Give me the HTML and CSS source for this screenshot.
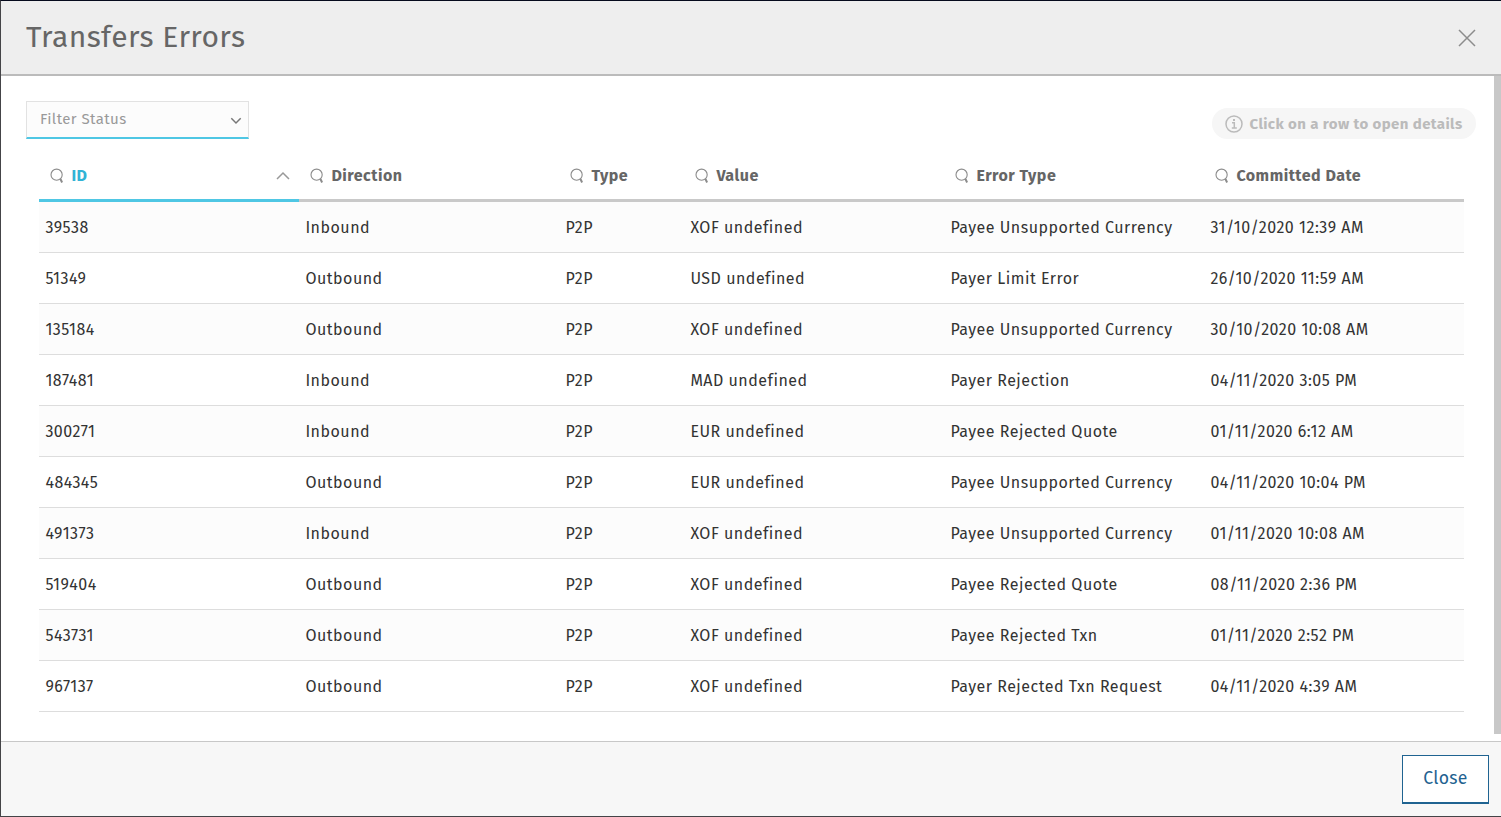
FILE: index.html
```html
<!DOCTYPE html>
<html lang="en">
<head>
<meta charset="utf-8">
<title>Transfers Errors</title>
<link rel="stylesheet" href="styles.css">
</head>
<body>
<svg class="sprite" aria-hidden="true">
  <symbol id="search" viewBox="0 0 14 16"><circle cx="6.6" cy="6.7" r="5.6"/><path d="M10.4 10.8l1.7 3.7" class="handle"/></symbol>
</svg>
<section class="modal">
  <header class="modal-header">
    <h1 class="title">Transfers Errors</h1>
    <svg class="dismiss" viewBox="0 0 18 18"><path d="M1 1l16 16M17 1L1 17"/></svg>
  </header>
  <main class="modal-body">
    <div class="toolbar">
      <div class="select"><span class="placeholder">Filter Status</span>
        <svg class="chevron" viewBox="0 0 12 8"><path d="M1.3 1.3L6 6l4.7-4.7"/></svg></div>
      <div class="hint">
        <svg class="info" viewBox="0 0 18 18"><circle cx="9" cy="9" r="8"/><path d="M7 7.7h2.3v5M6.8 13h5" /><path class="dot" d="M8 4h2v2H8z"/></svg>
        <span class="hint-text">Click on a row to open details</span></div>
    </div>
    <div class="table">
      <div class="row head">
        <div class="th active"><svg class="search"><use href="#search"/></svg><span>ID</span><svg class="sort" viewBox="0 0 14 9"><path d="M1 8l6-6 6 6"/></svg></div>
        <div class="th"><svg class="search"><use href="#search"/></svg><span>Direction</span></div>
        <div class="th"><svg class="search"><use href="#search"/></svg><span>Type</span></div>
        <div class="th"><svg class="search"><use href="#search"/></svg><span>Value</span></div>
        <div class="th"><svg class="search"><use href="#search"/></svg><span>Error Type</span></div>
        <div class="th"><svg class="search"><use href="#search"/></svg><span>Committed Date</span></div>
      </div>
      <div class="row"><div>39538</div><div>Inbound</div><div>P2P</div><div>XOF undefined</div><div>Payee Unsupported Currency</div><div>31/10/2020 12:39 AM</div></div>
      <div class="row"><div>51349</div><div>Outbound</div><div>P2P</div><div>USD undefined</div><div>Payer Limit Error</div><div>26/10/2020 11:59 AM</div></div>
      <div class="row"><div>135184</div><div>Outbound</div><div>P2P</div><div>XOF undefined</div><div>Payee Unsupported Currency</div><div>30/10/2020 10:08 AM</div></div>
      <div class="row"><div>187481</div><div>Inbound</div><div>P2P</div><div>MAD undefined</div><div>Payer Rejection</div><div>04/11/2020 3:05 PM</div></div>
      <div class="row"><div>300271</div><div>Inbound</div><div>P2P</div><div>EUR undefined</div><div>Payee Rejected Quote</div><div>01/11/2020 6:12 AM</div></div>
      <div class="row"><div>484345</div><div>Outbound</div><div>P2P</div><div>EUR undefined</div><div>Payee Unsupported Currency</div><div>04/11/2020 10:04 PM</div></div>
      <div class="row"><div>491373</div><div>Inbound</div><div>P2P</div><div>XOF undefined</div><div>Payee Unsupported Currency</div><div>01/11/2020 10:08 AM</div></div>
      <div class="row"><div>519404</div><div>Outbound</div><div>P2P</div><div>XOF undefined</div><div>Payee Rejected Quote</div><div>08/11/2020 2:36 PM</div></div>
      <div class="row"><div>543731</div><div>Outbound</div><div>P2P</div><div>XOF undefined</div><div>Payee Rejected Txn</div><div>01/11/2020 2:52 PM</div></div>
      <div class="row"><div>967137</div><div>Outbound</div><div>P2P</div><div>XOF undefined</div><div>Payer Rejected Txn Request</div><div>04/11/2020 4:39 AM</div></div>
    </div>
    <div class="scrollbar"></div>
  </main>
  <footer class="modal-footer"><button class="close">Close</button></footer>
</section>
</body>
</html>
```
FILE: styles.css
```css
* { box-sizing: border-box; }
body { margin: 0; font-family: "Fira Sans", "Noto Sans", sans-serif; font-size: 16px; letter-spacing: 0.5px; color: #333; background: #fff; }
svg { fill: none; flex: none; display: block; }
.sprite { position: absolute; width: 0; height: 0; }
.modal { width: 1501px; height: 817px; display: flex; flex-direction: column; border: solid #444447; border-width: 1px 0 1px 1px; border-top-color: #050a1c; overflow: hidden; }
.modal-header { height: 75px; flex: none; display: flex; justify-content: space-between; align-items: center; padding: 0 26px 0 25px; background: #eee; border-bottom: 2px solid #bbb; }
.title { margin: 0 0 2px; font-size: 30px; line-height: 40px; font-weight: 400; color: #666; letter-spacing: 0.4px; }
.dismiss { width: 18px; height: 18px; margin-right: -0.5px; stroke: #8c8c8c; stroke-width: 1.5; }
.modal-body { flex: 1; position: relative; padding: 25px 37px 0 25px; }
.toolbar { display: flex; justify-content: space-between; align-items: flex-start; height: 50px; margin-right: -12px; }
.select { width: 223px; height: 38px; display: flex; align-items: center; justify-content: space-between; padding: 0 6px 0 13px; background: #fcfcfc; border: 1px solid #e2e2e2; border-bottom: 2px solid #4fc7e4; color: #999; font-size: 15px; }
.placeholder { letter-spacing: 0.4px; line-height: 18px; margin-bottom: 1px; }
.chevron { width: 12px; height: 8px; margin-top: 3px; stroke: #777; stroke-width: 1.5; }
.hint { display: flex; align-items: center; gap: 7px; width: 264px; height: 31px; margin-top: 7px; padding-left: 12.5px; border-radius: 16px; background: #f6f6f6; color: #bbb; font-weight: 700; font-size: 15px; letter-spacing: 0.4px; white-space: nowrap; }
.info { width: 18px; height: 18px; stroke: #bbb; stroke-width: 1.5; }
.info .dot { fill: #bbb; stroke: none; }
.table { width: 1425px; margin-left: 13px; }
.row { display: grid; grid-template-columns: 260px 260px 125px 260px 260px 260px; height: 51px; line-height: 52px; border-bottom: 1px solid #ddd; white-space: nowrap; }
.row > div { height: 50px; padding-left: 6.4px; }
.row:nth-child(even) { background: #fcfcfc; }
.head { border: 0; color: #666; font-weight: 700; line-height: 20px; }
.head span { margin-top: 2px; }
.row > .th { height: 51px; display: flex; align-items: center; padding: 0 9px 0 11px; border-bottom: 3px solid #c9c9c9; }
.row > .active { color: #32b3d5; border-color: #4fc7e4; }
.search { width: 14px; height: 16px; margin: 1px 7.4px 0 0; stroke: #8c8c8c; stroke-width: 1.1; }
.handle { stroke-width: 2; }
.sort { width: 14px; height: 9px; margin-left: auto; stroke: #999; stroke-width: 1.5; }
.modal-footer { height: 75px; flex: none; display: flex; justify-content: flex-end; padding: 13px 12px; border-top: 1px solid #c8c8c8; background: #f7f7f7; }
.close { width: 87px; height: 49px; padding: 0 0 2px; border: 1px solid #1f6391; border-bottom-width: 2px; background: #fff; color: #1f6391; font: 17.6px "Fira Sans", "Noto Sans", sans-serif; letter-spacing: 0.3px; }
.scrollbar { position: absolute; top: 0; right: 0; width: 7px; height: 658px; background: #c8c8c8; }
```
